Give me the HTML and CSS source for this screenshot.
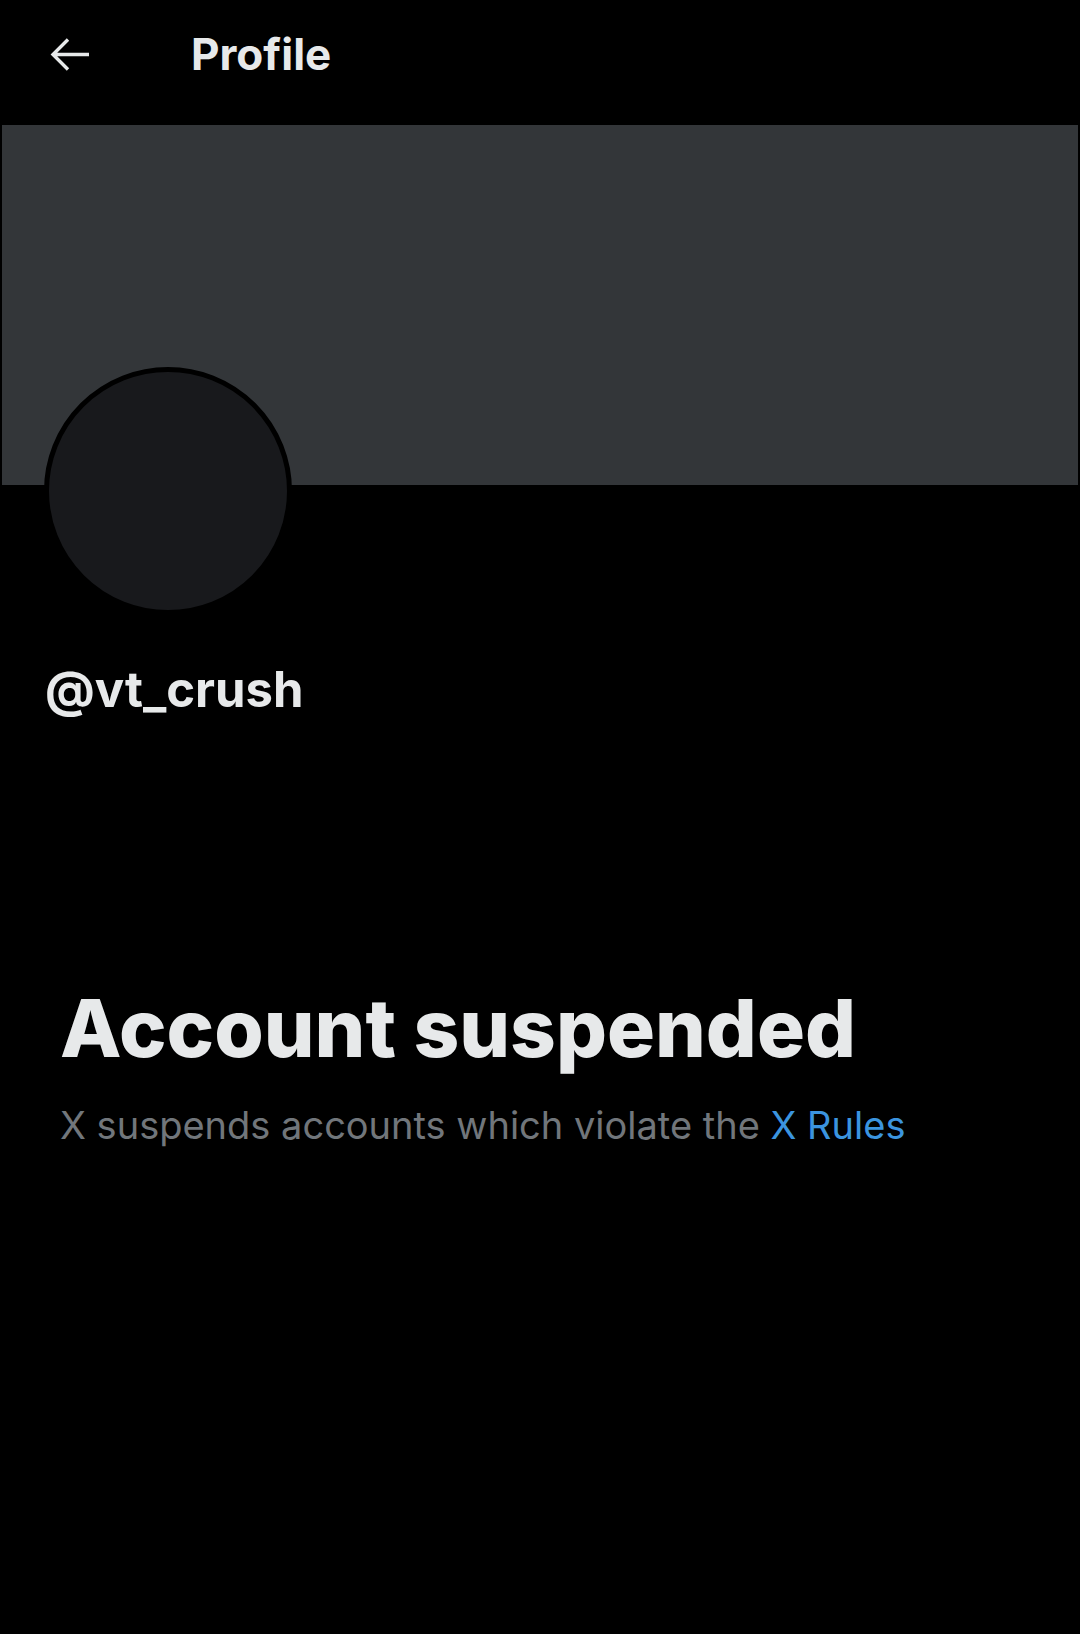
FILE: index.html
```html
<!DOCTYPE html>
<html lang="en">
<head>
<meta charset="utf-8">
<title>Profile</title>
<link rel="stylesheet" href="styles.css">
</head>
<body>
<div class="page">
  <header class="topbar">
    <button class="back" aria-label="Back">
      <svg width="40" height="34" viewBox="0 0 40 34"><path d="M39 16.5H3M18 1.5L3 16.5L18 31.5" fill="none" stroke="#e7e9ea" stroke-width="3.4" stroke-linejoin="miter"/></svg>
    </button>
    <h1 class="title">Profile</h1>
  </header>
  <div class="banner"></div>
  <div class="avatar"></div>
  <div class="handle">@vt_crush</div>
  <section class="suspended">
    <h2 class="suspended-title">Account suspended</h2>
    <p class="suspended-text">X suspends accounts which violate the <a class="rules" href="#">X Rules</a></p>
  </section>
</div>
</body>
</html>
```
FILE: styles.css
```css
html, body {
  margin: 0;
  padding: 0;
  background: #000;
}
body {
  font-family: Inter, "Noto Sans", "Liberation Sans", sans-serif;
  color: #e7e9ea;
  width: 1080px;
  height: 1634px;
  overflow: hidden;
}
.topbar {
  height: 125px;
  display: flex;
  align-items: center;
  padding-left: 50px;
  box-sizing: border-box;
  padding-bottom: 18px;
}
.back {
  background: none;
  border: 0;
  padding: 0;
  width: 40px;
  height: 34px;
  display: flex;
  margin-top: 2px;
}
.title {
  margin: 0 0 0 101px;
  font-size: 44px;
  font-weight: 700;
  letter-spacing: 0;
}
.banner {
  margin: 0 2px;
  height: 360px;
  background: #333639;
}
.avatar {
  margin: -118px 0 0 44px;
  width: 238px;
  height: 238px;
  border: 5px solid #000;
  border-radius: 50%;
  background: #18191c;
}
.handle {
  margin: 45px 0 0 45px;
  font-size: 49px;
  font-weight: 700;
  line-height: 60px;
}
.suspended {
  padding: 0 60px;
  margin-top: 260px;
}
.suspended-title {
  margin: 0;
  font-size: 80px;
  font-weight: 800;
  line-height: 96px;
  letter-spacing: 0;
}
.suspended-text {
  margin: 25px 0 0;
  font-size: 38px;
  font-weight: 400;
  color: #71767b;
  line-height: 48px;
}
.rules {
  color: #3b94df;
  text-decoration: none;
}
```
